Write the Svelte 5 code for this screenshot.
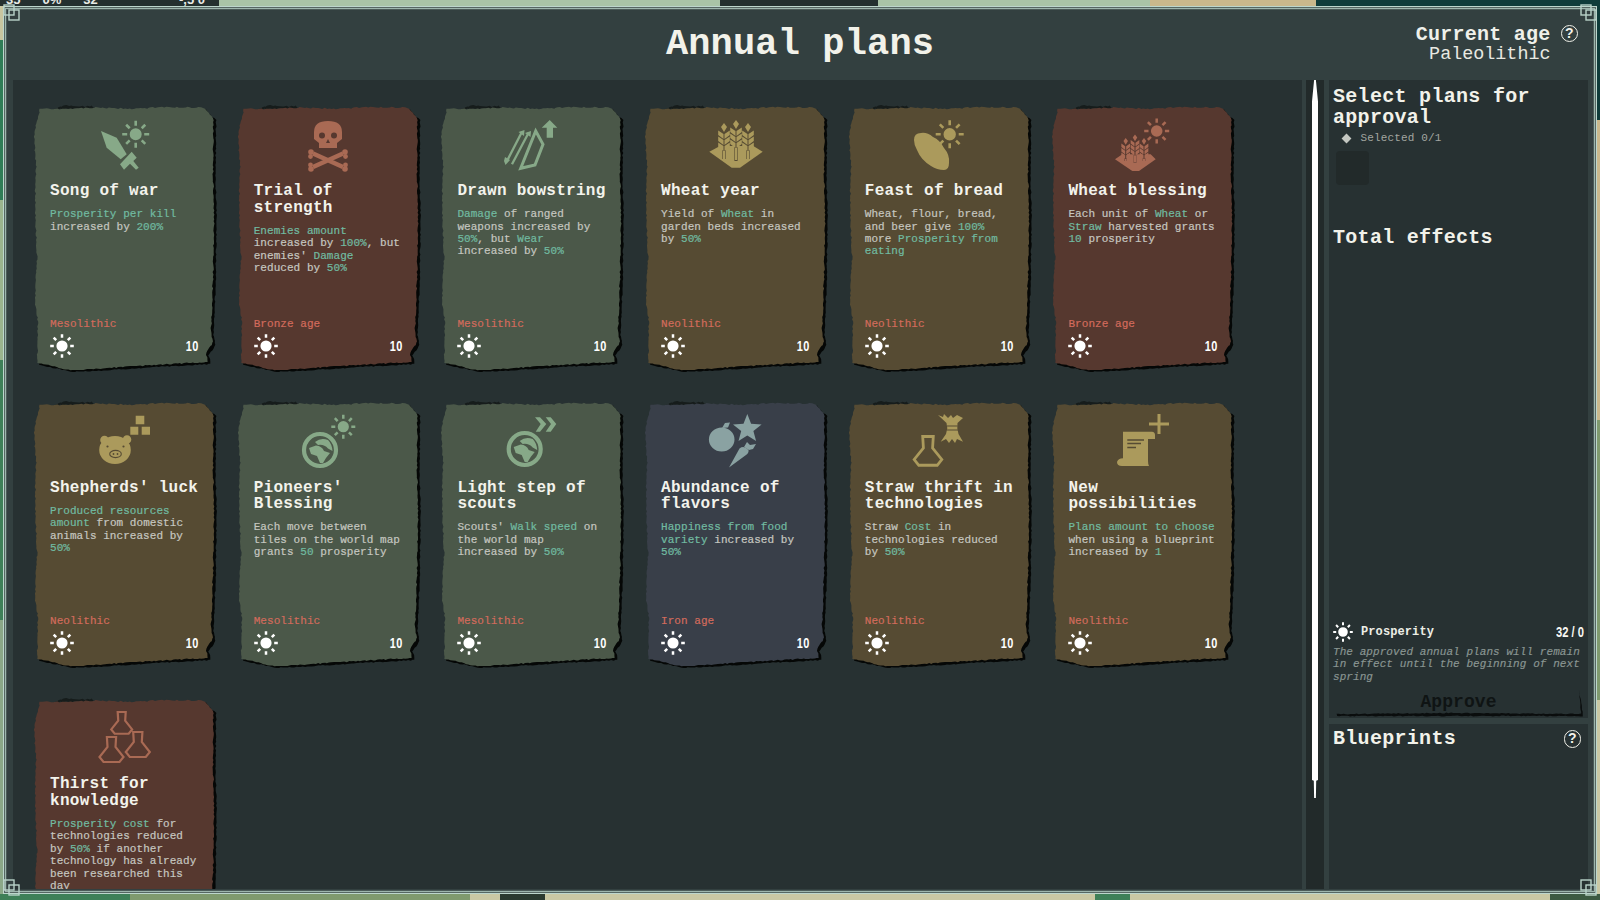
<script lang="ts">
	// Annual plans screen: torn paper cards, a scroll rail and the approval sidebar.

	type Layer = { d: string; w?: number; cut?: boolean };

	const palette = {
		green: { bg: '#4b5849', fg: '#87a988' },
		red: { bg: '#56382f', fg: '#a96a54' },
		gold: { bg: '#564b33', fg: '#ab9a5c' },
		slate: { bg: '#393f49', fg: '#8aa2a2' }
	};

	function circ(cx: number, cy: number, r: number, ry = r): string {
		return `M${cx - r} ${cy}a${r} ${ry} 0 1 0 ${r * 2} 0a${r} ${ry} 0 1 0 ${-r * 2} 0Z`;
	}

	function sun(cx: number, cy: number, r: number, r1: number, r2: number, w: number): string {
		let d = circ(cx, cy, r);
		for (let i = 0; i < 8; i++) {
			const a = (i * Math.PI) / 4;
			const c = Math.cos(a);
			const s = Math.sin(a);
			const h = w / 2;
			const p = [
				[cx + c * r1 - s * h, cy + s * r1 + c * h],
				[cx + c * r2 - s * h, cy + s * r2 + c * h],
				[cx + c * r2 + s * h, cy + s * r2 - c * h],
				[cx + c * r1 + s * h, cy + s * r1 - c * h]
			];
			d += 'M' + p.map((q) => q[0].toFixed(2) + ' ' + q[1].toFixed(2)).join('L') + 'Z';
		}
		return d;
	}

	function wheat(cx: number, top: number, h: number, g = 1): string {
		let d = `M${cx} ${top}L${cx + 3 * g} ${top + 4 * g}L${cx} ${top + 9 * g}L${cx - 3 * g} ${top + 4 * g}Z`;
		for (let i = 0; i < 3; i++) {
			const y = top + (8 + i * 6) * g;
			d += `M${cx - 0.5} ${y + 3 * g}L${cx - 5.8 * g} ${y - 0.5}L${cx - 5.8 * g} ${y + 4 * g}L${cx - 0.5} ${y + 8 * g}Z`;
			d += `M${cx + 0.5} ${y + 3 * g}L${cx + 5.8 * g} ${y - 0.5}L${cx + 5.8 * g} ${y + 4 * g}L${cx + 0.5} ${y + 8 * g}Z`;
		}
		d += `M${cx - 1} ${top + 28 * g}H${cx + 1}V${top + h}H${cx - 1}Z`;
		return d;
	}

	function flask(cx: number, top: number, k = 1): string {
		const pts = [[-4.6, 0], [4.6, 0], [4, 10], [12, 20], [8, 25], [-8, 25], [-12, 20], [-4, 10]];
		return 'M' + pts.map((p) => `${cx + p[0] * k} ${top + p[1] * k}`).join('L') + 'Z';
	}

	const globeLand = (x: number, y: number): Layer[] => [
		{ d: circ(x, y, 16), w: 4.2 },
		{ d: `M${x - 5} ${y - 8}Q${x + 1} ${y - 13} ${x + 8} ${y - 10}Q${x + 12} ${y - 6} ${x + 12.5} ${y + 1}L${x + 8} ${y - 1.5}Q${x + 4} ${y - 6} ${x - 2} ${y - 5}Z` },
		{ d: `M${x - 11} ${y - 2}L${x - 4} ${y - 4.5}Q${x + 2} ${y - 4} ${x + 4} ${y + 1}L${x + 10} ${y + 3}L${x + 6} ${y + 8}L${x + 3} ${y + 13}L${x} ${y + 13}L${x - 3} ${y + 6}L${x - 9} ${y + 4}Z` }
	];

	const star = (() => {
		let d = '';
		for (let i = 0; i < 10; i++) {
			const r = i % 2 ? 6.4 : 15;
			const a = -Math.PI / 2 + (i * Math.PI) / 5;
			d += (i ? 'L' : 'M') + (44.3 + Math.cos(a) * r).toFixed(1) + ' ' + (16 + Math.sin(a) * r).toFixed(1);
		}
		return d + 'Z';
	})();

	const icons: Record<string, Layer[]> = {
		sword: [
			{ d: sun(43.7, 17.3, 6, 8.5, 13.5, 2.6) },
			{ d: 'M9 14L24.7 20.7L34.7 37.3L28.7 42.3L14.7 30.7Z' },
			{ d: 'M28 47.3L39.7 34.7L44.7 40.7L41.3 44L46.7 50.7L44 52.7L38 46.7L32 52.7Z' }
		],
		skull: [
			{ d: 'M18 15Q18 4 32 4Q46 4 46 15L46 22L41 26L41 31L23 31L23 26L18 22Z' },
			{ d: circ(26, 18.5, 3), cut: true },
			{ d: circ(38, 18.5, 3), cut: true },
			{ d: 'M32 22L34 26H30Z', cut: true },
			{ d: 'M17 36.5L47 50M47 36.5L17 50', w: 4.6 },
			{ d: circ(15, 35, 2.8) },
			{ d: circ(14.5, 39.5, 2.4) },
			{ d: circ(49, 35, 2.8) },
			{ d: circ(49.5, 39.5, 2.4) },
			{ d: circ(14.5, 48, 2.4) },
			{ d: circ(15, 52, 2.8) },
			{ d: circ(49.5, 48, 2.4) },
			{ d: circ(49, 52, 2.8) }
		],
		bow: [
			{ d: 'M50.7 3L58.3 10.7H54V20.7H47.7V10.7H42.7Z' },
			{ d: 'M36.7 14L44 27.3L36 48L21.7 51.3Z', w: 3 },
			{ d: 'M23 14.7L8 44M29.6 15.7L13 47.3', w: 2.3 },
			{ d: 'M19.5 15L25.5 13L25 19ZM26 16L32 14L31.5 20Z' },
			{ d: 'M6 40L11 43L6.5 48L5 44Z' }
		],
		wheat: [
			{ d: 'M6.3 34.7L17 29H50.3L59.7 34.7L37 50.7H28.7Z' },
			{ d: 'M21 29V42M33 29V44M45 29V42', w: 3.2, cut: true },
			{ d: wheat(21, 6, 36) },
			{ d: wheat(33, 3, 40) },
			{ d: wheat(45, 6, 36) }
		],
		bread: [
			{ d: sun(42.7, 17.3, 6.2, 9, 14, 2.6) },
			{ d: 'M7 23Q7 16 14 16Q20 15 26 20Q33 23 37 31Q43 38 42 46Q42 53 37 53Q30 53 24 49Q14 43 10 33Q7 28 7 23Z' }
		],
		wheatsun: [
			{ d: sun(46.7, 14, 5.8, 8.2, 12.5, 2.5) },
			{ d: 'M5 42.3L12.3 37.3H40.7L45.7 42.3L29 54H22.3Z' },
			{ d: 'M15.7 37V44M25 37V46M34 37V44', w: 2.6, cut: true },
			{ d: wheat(15.7, 21, 23, 0.75) },
			{ d: wheat(25, 17.5, 28, 0.75) },
			{ d: wheat(34, 21, 23, 0.75) }
		],
		pig: [
			{ d: 'M43.7 2.7H52.3V11.3H43.7ZM38.3 13.7H46.3V21.7H38.3ZM49.7 13.7H58V21.7H49.7Z' },
			{ d: circ(23, 37, 15.8, 14) },
			{ d: circ(12.5, 27, 4.3) },
			{ d: circ(35, 26.5, 4.3) },
			{ d: circ(23.5, 41, 5.8, 3.6), w: 1.1, cut: true },
			{ d: circ(15.5, 33.5, 1.1) + circ(31.5, 33.5, 1.1) + circ(21.5, 41, 0.9) + circ(25.5, 41, 0.9), cut: true }
		],
		globesun: [{ d: sun(47.3, 13.7, 5.6, 8, 12, 2.5) }, ...globeLand(24, 37)],
		globerun: [
			{ d: 'M36 4.3H41L47.3 11L41 18.7H36.7L41.7 11ZM46.7 4.3H51.7L57.3 11L51.7 18.7H46.7L52 11Z' },
			...globeLand(25.7, 36)
		],
		food: [
			{ d: star },
			{ d: circ(18.7, 26.5, 12.8, 12) },
			{ d: 'M19 15L22 10L27 9.5L25 14.5Z' },
			{ d: 'M26 54.5L36.5 35.5Q41 32 45.5 37Q46 40 43 42Z' },
			{ d: 'M41 34L44 29L47 32L53 31L50 36L46 37Z' }
		],
		straw: [
			{ d: flask(21, 23.5, 1.15), w: 2.8 },
			{ d: 'M31 2L36 4L37 1L41 5L44 2L46 5L50 2L56 5L50.5 10L50.3 15.3L51.5 21L56 28.7L50 26L48 30L45 26L42 30L39 26L33.7 28.7L39 21L40.3 15.3L39.5 10Z' },
			{ d: 'M40 13H50.6M39.6 17H51', w: 1.1, cut: true }
		],
		scroll: [
			{ d: 'M47.5 1H50.5V9.5H59V12.5H50.5V21H47.5V12.5H39V9.5H47.5Z' },
			{ d: 'M13 18.7H42Q45 19 45 22V26H38V48Q38 51 39 53H12Q7 53 7 49Q8 45.5 13 45.3Z' },
			{ d: 'M17.3 27H34M17.3 30.5H31M17.3 34.5H26', w: 1.4, cut: true }
		],
		flasks: [
			{ d: flask(29.7, 2, 0.87), w: 2.2 },
			{ d: flask(19.5, 27, 1), w: 2.2 },
			{ d: flask(45.8, 22, 1), w: 2.2 }
		]
	};

	const plans = [
		{ title: 'Song of war', icon: 'sword', tone: 'green', age: 'Mesolithic', text: '*Prosperity per kill* increased by *200%*' },
		{ title: 'Trial of strength', icon: 'skull', tone: 'red', age: 'Bronze age', text: '*Enemies amount* increased by *100%*, but enemies\' *Damage* reduced by *50%*' },
		{ title: 'Drawn bowstring', icon: 'bow', tone: 'green', age: 'Mesolithic', text: '*Damage* of ranged weapons increased by *50%*, but *Wear* increased by *50%*' },
		{ title: 'Wheat year', icon: 'wheat', tone: 'gold', age: 'Neolithic', text: 'Yield of *Wheat* in garden beds increased by *50%*' },
		{ title: 'Feast of bread', icon: 'bread', tone: 'gold', age: 'Neolithic', text: 'Wheat, flour, bread, and beer give *100%* more *Prosperity from eating*' },
		{ title: 'Wheat blessing', icon: 'wheatsun', tone: 'red', age: 'Bronze age', text: 'Each unit of *Wheat* or *Straw* harvested grants *10* prosperity' },
		{ title: "Shepherds' luck", icon: 'pig', tone: 'gold', age: 'Neolithic', text: '*Produced resources amount* from domestic animals increased by *50%*' },
		{ title: "Pioneers' Blessing", icon: 'globesun', tone: 'green', age: 'Mesolithic', text: 'Each move between tiles on the world map grants *50* prosperity' },
		{ title: 'Light step of scouts', icon: 'globerun', tone: 'green', age: 'Mesolithic', text: "Scouts' *Walk speed* on the world map increased by *50%*" },
		{ title: 'Abundance of flavors', icon: 'food', tone: 'slate', age: 'Iron age', text: '*Happiness from food variety* increased by *50%*' },
		{ title: 'Straw thrift in technologies', icon: 'straw', tone: 'gold', age: 'Neolithic', text: 'Straw *Cost* in technologies reduced by *50%*' },
		{ title: 'New possibilities', icon: 'scroll', tone: 'gold', age: 'Neolithic', text: '*Plans amount to choose* when using a blueprint increased by *1*' },
		{ title: 'Thirst for knowledge', icon: 'flasks', tone: 'red', age: 'Bronze age', text: '*Prosperity cost* for technologies reduced by *50%* if another technology has already been researched this day' }
	];

	// every card uses the same torn outline, so it is only built once
	function torn(points: number[][], seed: number, amp: number): string {
		let s = seed;
		const rnd = () => {
			s = (s * 16807) % 2147483647;
			return s / 2147483647 - 0.5;
		};
		let d = '';
		points.forEach((p, i) => {
			const q = points[(i + 1) % points.length];
			const n = Math.max(1, Math.round(Math.hypot(q[0] - p[0], q[1] - p[1]) / 2.2));
			for (let k = 0; k < n; k++) {
				const t = k / n;
				const x = p[0] + (q[0] - p[0]) * t + rnd() * amp;
				const y = p[1] + (q[1] - p[1]) * t + rnd() * amp;
				d += (d ? 'L' : 'M') + x.toFixed(1) + ' ' + y.toFixed(1);
			}
		});
		return d + 'Z';
	}

	const outline = [
		[6, 1.5], [30, 2], [62, 0.5], [100, 2], [130, 0], [169, 0.5], [174, 6], [179.5, 11], [179, 60], [180, 110],
		[179, 170], [177, 228], [179, 236], [172, 246], [174, 255], [120, 258], [60, 262], [36, 263], [3, 256],
		[4, 215], [1, 195], [3, 150], [1, 100], [2, 60], [0, 30], [3, 14]
	];
	const cardPath = torn(outline, 4711, 1.3);
	const shadowPath = torn(outline.map((p) => [p[0] + 2.6, p[1] + 2]), 991, 1.1);
	const fringePath = torn([[20, 2], [32, -1.5], [44, -0.5], [58, -1], [62, 2]], 37, 1.6);

	const cardSun = sun(12, 12, 5.6, 8.2, 11.8, 2.5);
	const smallSun = sun(10, 10, 4.8, 6.8, 9.8, 2);
	const approveLine = torn([[4, 28], [120, 27], [248, 28], [246, 4], [248, 15], [250, 30], [120, 30], [4, 30]], 77, 0.9);

	const pieces = (text: string) => text.split('*');
</script>

<div class="screen">
	<div class="status">
		<span>35</span><span>0%</span><span>32</span><span class="clock">-,5 0</span>
	</div>

	<div class="window">
		{#each ['tl', 'tr', 'bl', 'br'] as c}
			<svg class="corner {c}" width="17" height="17" viewBox="0 0 17 17" aria-hidden="true">
				<rect x="1" y="1" width="10" height="10" fill="none" stroke="#b9d3c9" stroke-width="1.4" />
				<rect x="6" y="6" width="10" height="10" fill="none" stroke="#b9d3c9" stroke-width="1.4" />
			</svg>
		{/each}

		<header class="head">
			<span></span>
			<h1>Annual plans</h1>
			<div class="age-box">
				<div class="age-text">
					<div class="age-label">Current age</div>
					<div class="age-value">Paleolithic</div>
				</div>
				<span class="help">?</span>
			</div>
		</header>

		<div class="body">
			<main class="plans">
				{#each plans as plan}
					{@const tone = palette[plan.tone]}
					<article class="card">
						<svg class="paper" width="188" height="270" viewBox="-2 -3 188 270" aria-hidden="true">
							<path d={fringePath} fill="#161c1b" />
							<path d={shadowPath} fill="#050706" />
							<path d={cardPath} fill={tone.bg} />
						</svg>
						<svg class="icon" width="64" height="56" viewBox="0 0 64 56" aria-hidden="true">
							{#each icons[plan.icon] as l}
								<path
									d={l.d}
									fill={l.w ? 'none' : l.cut ? tone.bg : tone.fg}
									stroke={l.w ? (l.cut ? tone.bg : tone.fg) : 'none'}
									stroke-width={l.w}
									stroke-linejoin="miter"
									fill-rule="evenodd"
								/>
							{/each}
						</svg>
						<h3>{plan.title}</h3>
						<p class="desc">
							{#each pieces(plan.text) as part, i}{#if i % 2}<b>{part}</b>{:else}{part}{/if}{/each}
						</p>
						<div class="era">{plan.age}</div>
						<div class="foot">
							<svg width="24" height="24" viewBox="0 0 24 24" aria-hidden="true"><path d={cardSun} fill="#fff" /></svg>
							<span class="num">10</span>
						</div>
					</article>
				{/each}
			</main>

			<div class="rail"><div class="thumb"></div></div>

			<aside class="side">
				<section class="approval">
					<h2>Select plans for approval</h2>
					<div class="selected"><i class="diamond"></i>Selected 0/1</div>
					<div class="slot"></div>
					<h2 class="effects">Total effects</h2>
					<div class="cost">
						<svg width="20" height="20" viewBox="0 0 20 20" aria-hidden="true"><path d={smallSun} fill="#fff" /></svg>
						<span class="cost-name">Prosperity</span>
						<span class="cost-num">32 / 0</span>
					</div>
					<p class="note">The approved annual plans will remain in effect until the beginning of next spring</p>
					<div class="approve">
						<svg class="approve-edge" width="252" height="32" viewBox="0 0 252 32" aria-hidden="true"><path d={approveLine} fill="#0a0d0d" /></svg>
						<span>Approve</span>
					</div>
				</section>
				<section class="blueprints">
					<h2>Blueprints</h2>
					<span class="help">?</span>
				</section>
			</aside>
		</div>
	</div>
</div>

<style>
	:global(body) {
		margin: 0;
		background: #273132;
	}

	.screen {
		position: relative;
		width: 1600px;
		height: 900px;
		overflow: hidden;
		box-sizing: border-box;
		padding: 6px 3px;
		background:
			linear-gradient(90deg, #a9c4a7 0 720px, #23302f 720px 878px, #a9c4a7 878px 1150px, #c9b88c 1150px 1316px, #0f3c3a 1316px) top / 100% 6px no-repeat,
			linear-gradient(90deg, #3e8058 0 130px, #7f9a6e 130px 470px, #c9c8a4 470px 500px, #2a3a30 500px 545px, #c9c8a4 545px 1095px, #3e8058 1095px 1130px, #c9c8a4 1130px 1550px, #3c5a42 1550px) bottom / 100% 6px no-repeat,
			linear-gradient(180deg, #c8c6a0 0 40px, #2f7d56 40px 200px, #9bb48e 200px 360px, #3e8058 360px 620px, #8ba888 620px) left / 3px 100% no-repeat,
			linear-gradient(180deg, #0f3c3a 0 120px, #c9b88c 120px 420px, #7f9a6e 420px 700px, #c9c8a4 700px) right / 3px 100% no-repeat;
	}

	.status {
		position: absolute;
		top: 0;
		left: 0;
		width: 219px;
		height: 6px;
		overflow: hidden;
		display: flex;
		align-items: flex-end;
		gap: 22px;
		padding-left: 6px;
		box-sizing: border-box;
		background: #24302f;
		color: #e8ebe6;
		font: 700 13px/13px 'Liberation Sans', sans-serif;
	}

	.status .clock {
		margin-left: auto;
		margin-right: 14px;
	}

	.window {
		position: relative;
		display: flex;
		flex-direction: column;
		height: 888px;
		box-sizing: border-box;
		border: 1px solid #bcd6cc;
		padding: 4px;
		background: #334040;
		box-shadow: inset 0 0 0 1px #566763, inset 0 0 0 2px #9db6ad, inset 0 0 0 3px #4c5c59;
		color: #f2f2ea;
		font-family: 'Liberation Mono', 'DejaVu Sans Mono', monospace;
	}

	.corner {
		position: absolute;
	}
	.corner.tl {
		top: -3px;
		left: -1px;
	}
	.corner.tr {
		top: -3px;
		right: -1px;
	}
	.corner.bl {
		bottom: -3px;
		left: -1px;
	}
	.corner.br {
		bottom: -3px;
		right: -1px;
	}

	.head {
		display: grid;
		grid-template-columns: 1fr auto 1fr;
		align-items: center;
		height: 69px;
		flex: none;
	}

	h1 {
		margin: 0 0 3px;
		font-size: 37px;
		line-height: 60px;
		font-weight: 700;
		letter-spacing: 0.15px;
	}

	.age-box {
		display: flex;
		justify-content: flex-end;
		align-items: flex-start;
		gap: 10px;
		padding: 0 14px 3px 0;
	}

	.age-text {
		text-align: right;
	}

	.age-label {
		font-size: 20px;
		line-height: 20px;
		letter-spacing: 0.25px;
		font-weight: 700;
		color: #eff0ea;
	}

	.age-value {
		margin-top: 1px;
		font-size: 18.4px;
		line-height: 18px;
		color: #e8e9e2;
	}

	.help {
		display: grid;
		place-items: center;
		width: 15.5px;
		height: 15.5px;
		border: 1.5px solid #f2f2ea;
		border-radius: 50%;
		font: 700 14px/15px 'Liberation Sans', sans-serif;
		color: #f2f2ea;
		flex: none;
	}

	.body {
		flex: 1;
		min-height: 0;
		display: flex;
		padding: 0 0 0 5px;
	}

	.plans {
		width: 1289px;
		flex: none;
		box-sizing: border-box;
		overflow: hidden;
		background: #273132;
		padding: 26.5px 0 0 21px;
		display: grid;
		grid-template-columns: repeat(6, 180px);
		grid-auto-rows: 262px;
		column-gap: 23.7px;
		row-gap: 34.7px;
	}

	.card {
		position: relative;
		width: 180px;
		height: 262px;
		box-sizing: border-box;
		padding: 10px 16px 10.5px;
		display: flex;
		flex-direction: column;
	}

	.card > * {
		position: relative;
	}

	.paper {
		position: absolute;
		left: -2px;
		top: -3px;
	}

	.icon {
		display: block;
		align-self: center;
		flex: none;
	}

	h3 {
		margin: 10.5px 0 0;
		width: 152px;
		font-size: 16px;
		line-height: 16.6px;
		font-weight: 700;
		letter-spacing: 0.28px;
		color: #f3f3ec;
	}

	.desc {
		margin: 8.5px 0 0;
		width: 150px;
		font-size: 11px;
		line-height: 12.42px;
		letter-spacing: 0.05px;
		color: #c6c7c0;
		-webkit-text-stroke: 0.2px currentColor;
	}

	.desc b {
		font-weight: 400;
		color: #71bba1;
	}

	.era {
		margin-top: auto;
		font-size: 11px;
		line-height: 12.4px;
		letter-spacing: 0.05px;
		color: #d26b5c;
		-webkit-text-stroke: 0.2px currentColor;
		flex: none;
	}

	.foot {
		margin-top: 3.5px;
		display: flex;
		align-items: center;
		justify-content: space-between;
		flex: none;
		height: 24px;
	}

	.num {
		font: 700 14px/14px 'Liberation Sans', sans-serif;
		letter-spacing: 0.6px;
		color: #fff;
		transform: translateX(1px) scaleX(0.78);
		transform-origin: right center;
	}

	.rail {
		width: 18px;
		margin-left: 4px;
		flex: none;
		background: #222a2a;
		display: flex;
		justify-content: center;
	}

	.thumb {
		width: 6px;
		height: 718px;
		background: #fff;
		clip-path: polygon(35% 0, 65% 0, 100% 3%, 100% 97.5%, 70% 97.6%, 65% 100%, 35% 100%, 30% 97.6%, 0 97.5%, 0 3%);
	}

	.side {
		width: 259px;
		margin-left: 5px;
		flex: none;
		display: flex;
		flex-direction: column;
		gap: 6px;
	}

	.approval {
		height: 638px;
		flex: none;
		box-sizing: border-box;
		background: #273132;
		padding: 5.5px 4px 2px;
		display: flex;
		flex-direction: column;
	}

	h2 {
		margin: 0;
		font-size: 20px;
		line-height: 21px;
		font-weight: 700;
		letter-spacing: 0.3px;
		color: #f2f2ea;
	}

	.selected {
		display: flex;
		align-items: center;
		margin-top: 4px;
		font-size: 11px;
		line-height: 13px;
		letter-spacing: 0.15px;
		color: #a3a6a0;
	}

	.diamond {
		width: 7px;
		height: 7px;
		margin: 0 10.5px 0 10px;
		background: #c4c7c1;
		transform: rotate(45deg);
	}

	.slot {
		width: 33px;
		height: 34px;
		margin: 6.5px 0 0 3px;
		border-radius: 4px;
		background: #222a2a;
		flex: none;
	}

	.effects {
		margin-top: 42px;
	}

	.cost {
		margin-top: auto;
		display: flex;
		align-items: center;
		height: 20px;
		font-size: 12px;
		font-weight: 700;
	}

	.cost-name {
		margin-left: 8px;
		letter-spacing: 0.1px;
		color: #eceee6;
	}

	.cost-num {
		margin-left: auto;
		font: 700 14px/14px 'Liberation Sans', sans-serif;
		color: #f7f7f2;
		transform: scaleX(0.8);
		transform-origin: right center;
	}

	.note {
		margin: 4px 0 0;
		font-size: 11px;
		line-height: 12.4px;
		font-style: italic;
		letter-spacing: 0.07px;
		color: #8a9692;
		-webkit-text-stroke: 0.15px currentColor;
	}

	.approve {
		position: relative;
		height: 28px;
		margin-top: 5px;
		display: flex;
		align-items: flex-start;
		justify-content: center;
		padding-top: 5px;
		box-sizing: border-box;
		font-size: 18px;
		line-height: 18px;
		letter-spacing: 0.05px;
		color: #0f1414;
		font-weight: 700;
	}

	.approve-edge {
		position: absolute;
		left: 0;
		top: -2px;
	}

	.blueprints {
		flex: 1;
		background: #273132;
		padding: 4px 7px 0 4px;
		display: flex;
		justify-content: space-between;
		align-items: flex-start;
	}

	.blueprints .help {
		margin-top: 2px;
	}
</style>
